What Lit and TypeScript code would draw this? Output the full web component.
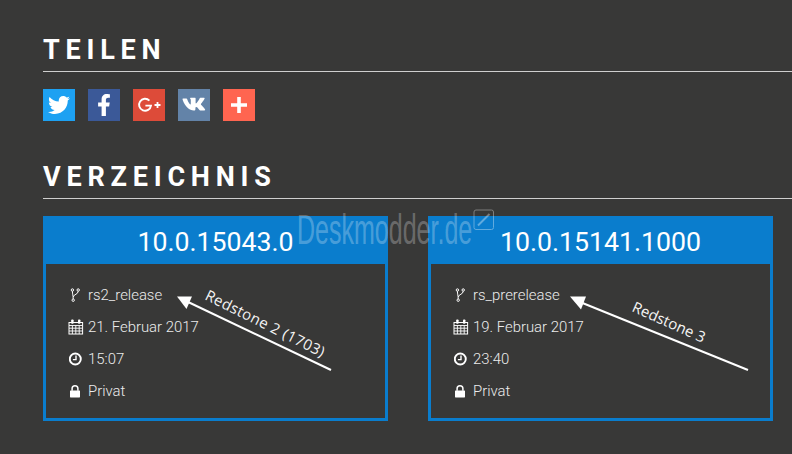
import { LitElement, html, css, svg } from "lit";
import { customElement } from "lit/decorators.js";

const fork = html`<svg class="ri" viewBox="0 0 14 14"><g fill="none" stroke="#fff" stroke-width="1"><circle cx="3.4" cy="2" r="1.2"/><circle cx="9.2" cy="2" r="1.2"/><circle cx="4.2" cy="12.2" r="1.2"/><path d="M3.4 3.2C3.4 6 4.2 7.5 4.2 11M9.2 3.2C9.2 6.5 4.8 6 4.3 9"/></g></svg>`;
const cal = html`<svg class="ri" viewBox="0 0 14 14" overflow="visible"><g fill="none" stroke="#fff"><rect x="0" y="2.5" width="13.6" height="11.5"/><path d="M0 5.5h13.6M0 8.2h13.6M0 11h13.6M3.4 5.5v8.5M6.8 5.5v8.5M10.2 5.5v8.5" stroke-width=".9"/></g><rect x="2.2" y="-.5" width="2.4" height="4.2" rx=".8" fill="#fff"/><rect x="9" y="-.5" width="2.4" height="4.2" rx=".8" fill="#fff"/></svg>`;
const clock = html`<svg class="ri" viewBox="0 0 14 14"><g fill="none" stroke="#fff"><circle cx="6.3" cy="7" r="5.5" stroke-width="1.9"/><path d="M7 3.4V7.6H3.9" stroke-width="1.4"/></g></svg>`;
const lock = html`<svg class="ri" viewBox="0 0 14 14"><rect x="1" y="6.4" width="10" height="7" rx=".6" fill="#fff"/><path d="M3.1 6.8V4.6a2.9 2.9 0 0 1 5.8 0v2.2" fill="none" stroke="#fff" stroke-width="1.5"/></svg>`;

const twitter = html`<svg viewBox="0 0 512 512" width="22" height="22"><path fill="#fff" d="M459.37 151.716c.325 4.548.325 9.097.325 13.645 0 138.72-105.583 298.558-298.558 298.558-59.452 0-114.68-17.219-161.137-47.106 8.447.974 16.568 1.299 25.34 1.299 49.055 0 94.213-16.568 130.274-44.832-46.132-.975-84.792-31.188-98.112-72.772 6.498.974 12.995 1.624 19.818 1.624 9.421 0 18.843-1.3 27.614-3.573-48.081-9.747-84.143-51.98-84.143-102.985v-1.299c13.969 7.797 30.214 12.67 47.431 13.319-28.264-18.843-46.781-51.005-46.781-87.391 0-19.492 5.197-37.36 14.294-52.954 51.655 63.675 129.3 105.258 216.365 109.807-1.624-7.797-2.599-15.918-2.599-24.04 0-57.828 46.782-104.934 104.934-104.934 30.213 0 57.502 12.67 76.67 33.137 23.715-4.548 46.456-13.32 66.599-25.34-7.798 24.366-24.366 44.833-46.132 57.827 21.117-2.273 41.584-8.122 60.426-16.243-14.292 20.791-32.161 39.308-52.628 54.253z"/></svg>`;
const facebook = html`<svg viewBox="0 0 320 512" width="14" height="22"><path fill="#fff" d="M279.14 288l14.22-92.66h-88.91v-60.13c0-25.35 12.42-50.06 52.24-50.06h40.42V6.26S260.43 0 225.36 0c-73.22 0-121.08 44.38-121.08 124.72v70.62H22.89V288h81.39v224h100.17V288z"/></svg>`;
const gplus = html`<svg viewBox="0 0 32 32" width="32" height="32"><path d="M16.4 11.6a6 6 0 1 0 1.6 5H12.4" fill="none" stroke="#fff" stroke-width="1.9"/><path d="M21.5 16h6M24.5 13v6" stroke="#fff" stroke-width="1.8" fill="none"/></svg>`;
const vk = html`<svg viewBox="0 0 32 32" width="32" height="32"><path fill="#fff" d="M4.2 9.6h4.2c.4 0 .6.2.8.6.9 2.6 2.4 5.3 3.2 5.3.3 0 .4-.2.4-1v-3.4c-.1-1.3-.8-1.3-.8-1.8 0-.3.2-.5.6-.5h4.5c.4 0 .5.2.5.6v4.4c0 .5.2.6.3.6.8 0 2.9-3.4 3.7-5 .1-.4.4-.6.8-.6h3.6c.6 0 .8.3.6.8-.5 1.8-3.7 5.2-3.7 5.7 0 .3.1.5.4.8 1 1 3.4 3.3 3.8 4.5.2.6-.1.9-.7.9h-3.6c-.9 0-1.3-.5-2.2-1.5-.9-.9-1.5-1.9-2.3-1.9-.7 0-.9.5-.9 1.8 0 1.1-.3 1.6-1.6 1.6-4.3 0-8.6-3.7-11.1-10.5-.3-.8-.2-1 .5-1z"/></svg>`;
const plus = html`<svg viewBox="0 0 32 32" width="32" height="32"><path d="M16 8v16M8 16h16" stroke="#fff" stroke-width="3.6" fill="none"/></svg>`;

const overlay = svg`
  <g fill="#fff">
    <path d="M177 296.5L192 296.5L186.5 309Z"/>
    <path d="M570 296.5L586 296.5L581 309.5Z"/>
  </g>
  <g stroke="#fff" stroke-width="2" fill="none">
    <path d="M186 301L331 370"/>
    <path d="M580 302L748 370"/>
  </g>
  <text class="note wide" transform="translate(204 299) rotate(26.5)">Redstone 2 (1703)</text>
  <text class="note" transform="translate(631 311) rotate(24)">Redstone 3</text>
  <g opacity=".35" stroke="#fff" fill="none">
    <rect x="474" y="210" width="19.5" height="19.5" rx="2"/>
    <path d="M478 225.5L489.5 214" stroke-width="2"/>
  </g>
`;

const builds = [
  { v: "10.0.15043.0", b: "rs2_release", d: "21. Februar 2017", t: "15:07" },
  { v: "10.0.15141.1000", b: "rs_prerelease", d: "19. Februar 2017", t: "23:40" },
];

@customElement("app-root")
export class AppRoot extends LitElement {
  static styles = css`
    :host { display: block; position: relative; width: 792px; height: 454px; overflow: hidden; background: #383837; font-family: Roboto, sans-serif; color: #fff; }
    .page { padding: 36px 0 0 43px; }
    h2 { margin: 0; height: 36px; box-sizing: border-box; font: 700 27px/28px Roboto, sans-serif; letter-spacing: 5.8px; border-bottom: 1px solid #cfcfcf; color: #fff; white-space: nowrap; }
    .share { display: flex; gap: 13px; margin: 17px 0 42px; }
    .s { width: 32px; height: 32px; display: flex; align-items: center; justify-content: center; }
    .tw { background: #1da1f2; } .fb { background: #3b5998; } .gp { background: #dd4b39; } .vk { background: #6383a8; } .pl { background: #ff6550; }
    .cards { display: flex; gap: 40px; margin-top: 17px; }
    .card { width: 345px; height: 205px; box-sizing: border-box; border: 3px solid #0a7dcd; }
    .head { height: 45px; background: #0a7dcd; text-align: center; font: 400 26.7px/46px Roboto, sans-serif; }
    .rows { padding: 15px 0 0 23px; display: flex; flex-direction: column; }
    .row { height: 32px; display: flex; align-items: center; gap: 5px; font: 300 14.9px/32px Roboto, sans-serif; color: #ececec; }
    .ri { width: 14px; height: 14px; flex: none; }
    .over { position: absolute; inset: 0; width: 792px; height: 454px; pointer-events: none; }
    .note { font: 400 15px "Open Sans", sans-serif; fill: #f4f4f4; }
    .wide { letter-spacing: .35px; }
    .mark { position: absolute; left: 297px; top: 207px; font: 400 43px/44px "Liberation Sans", sans-serif; color: rgba(255,255,255,.27); transform-origin: 0 0; transform: scaleX(.582); white-space: nowrap; }
  `;
  render() {
    return html`
      <div class="page">
        <h2>TEILEN</h2>
        <div class="share">
          <div class="s tw">${twitter}</div><div class="s fb">${facebook}</div><div class="s gp">${gplus}</div><div class="s vk">${vk}</div><div class="s pl">${plus}</div>
        </div>
        <h2>VERZEICHNIS</h2>
        <div class="cards">
          ${builds.map((c) => html`
            <div class="card">
              <div class="head">${c.v}</div>
              <div class="rows">
                <div class="row">${fork}<span>${c.b}</span></div>
                <div class="row">${cal}<span>${c.d}</span></div>
                <div class="row">${clock}<span>${c.t}</span></div>
                <div class="row">${lock}<span>Privat</span></div>
              </div>
            </div>`)}
        </div>
      </div>
      <div class="mark">Deskmodder.de</div>
      <svg class="over" viewBox="0 0 792 454">${overlay}</svg>
    `;
  }
}
